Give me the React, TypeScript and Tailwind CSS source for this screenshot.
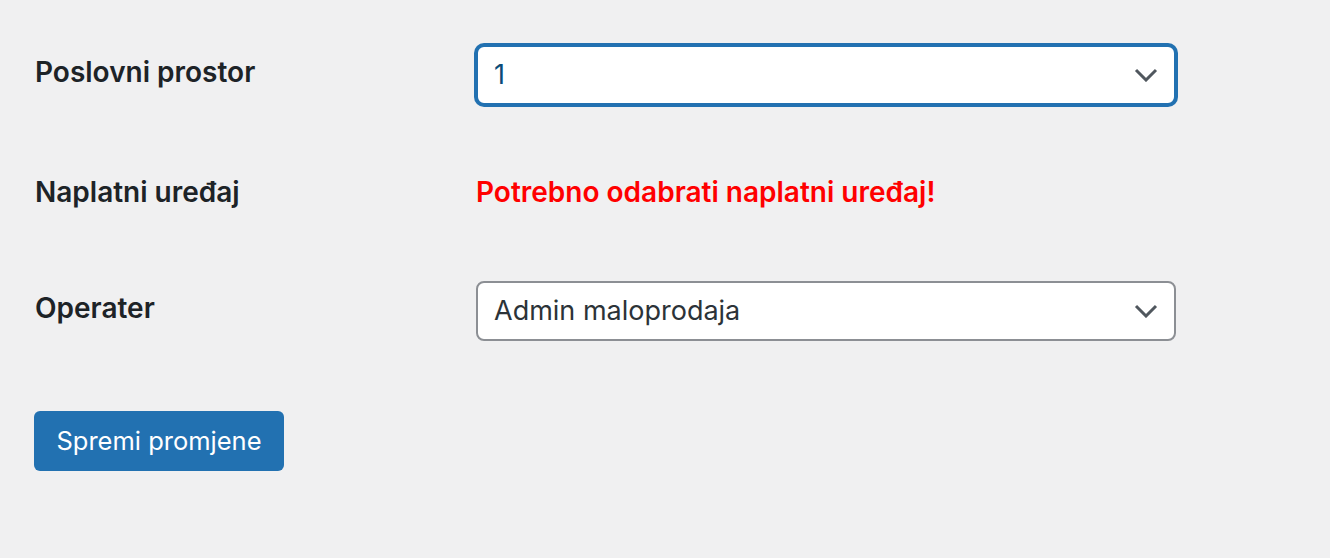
import { FC } from 'react'

const Chevron: FC = () => (
  <svg
    className="absolute right-[16px] top-1/2 -translate-y-1/2"
    width="24"
    height="14"
    viewBox="0 0 24 14"
    fill="none"
  >
    <path d="M2 2l10 10L22 2" stroke="#50575e" strokeWidth="3" />
  </svg>
)

interface SelectProps {
  value: string
  focused?: boolean
}

const FakeSelect: FC<SelectProps> = ({ value, focused }) => (
  <div
    className={
      focused
        ? 'relative flex items-center h-[60px] w-[700px] bg-white rounded-[8px] border-2 border-[#2271b1] shadow-[0_0_0_2px_#2271b1] pl-[16px] text-[#0a4b78]'
        : 'relative flex items-center h-[60px] w-[700px] bg-white rounded-[8px] border-2 border-[#8c8f94] pl-[16px] text-[#2c3338]'
    }
  >
    <span className="text-[27px] leading-[36px]">{value}</span>
    <Chevron />
  </div>
)

const App: FC = () => {
  return (
    <div className="min-h-screen bg-[#f0f0f1] font-['Inter',sans-serif] text-[#1d2327]">
      <div className="pt-[45px] pl-[34px]">
        {/* Poslovni prostor */}
        <div className="flex items-start">
          <label className="w-[442px] pl-[1px] mt-[9px] text-[28px] leading-[36px] font-semibold">
            Poslovni prostor
          </label>
          <FakeSelect value="1" focused />
        </div>

        {/* Naplatni uređaj */}
        <div className="flex items-baseline mt-[69px]">
          <label className="w-[442px] pl-[1px] text-[28px] leading-[36px] font-semibold">
            Naplatni uređaj
          </label>
          <p className="text-[28px] leading-[36px] font-semibold text-[#ff0000]">
            Potrebno odabrati naplatni uređaj!
          </p>
        </div>

        {/* Operater */}
        <div className="flex items-start mt-[71px]">
          <label className="w-[442px] pl-[1px] mt-[9px] text-[28px] leading-[36px] font-semibold">
            Operater
          </label>
          <FakeSelect value="Admin maloprodaja" />
        </div>

        <button className="mt-[70px] h-[60px] w-[250px] rounded-[6px] bg-[#2271b1] text-white text-[25.5px]">
          Spremi promjene
        </button>
      </div>
    </div>
  )
}

export default App
